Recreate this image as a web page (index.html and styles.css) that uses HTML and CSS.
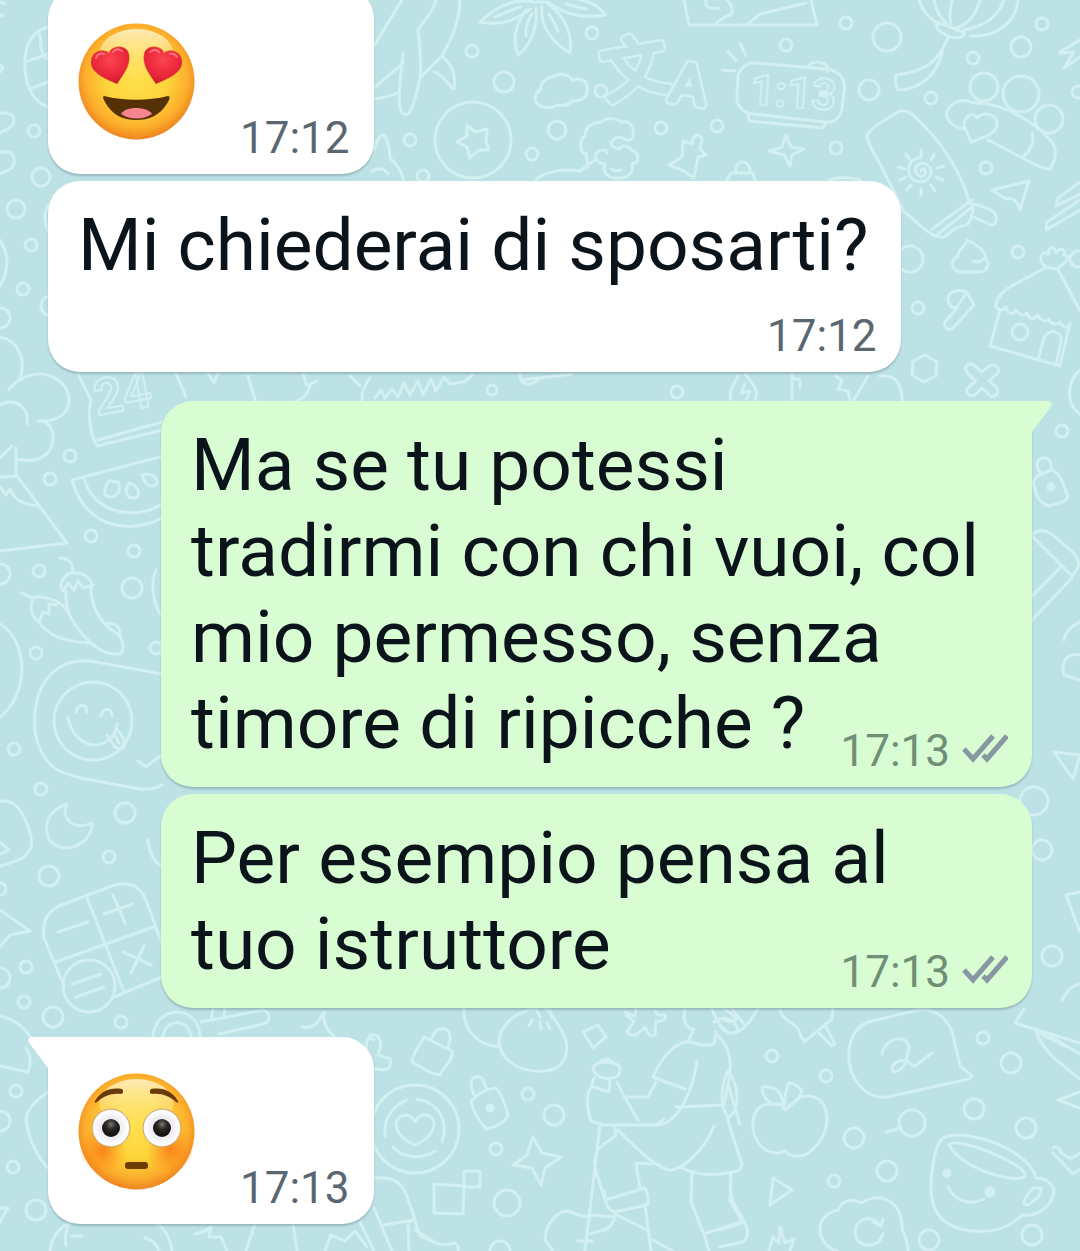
FILE: index.html
```html
<!DOCTYPE html>
<html lang="it">

<head>
    <meta charset="UTF-8">
    <meta name="viewport" content="width=device-width, initial-scale=1.0">
    <title>Chat</title>
    <link rel="stylesheet" href="styles.css">
</head>

<body>
    <!-- doodle wallpaper -->
    <svg class="wallpaper" viewBox="0 0 1080 1251" preserveAspectRatio="xMidYMid slice" aria-hidden="true">
        <!-- small dots -->
        <g>
            <circle cx="34" cy="131" r="6" />
            <circle cx="41" cy="177" r="9" />
            <circle cx="16" cy="209" r="9" />
            <circle cx="31" cy="245" r="6" />
            <circle cx="23" cy="289" r="6" />
            <circle cx="0" cy="318" r="10" />
            <circle cx="51" cy="306" r="10" />
            <circle cx="410" cy="140" r="6" />
            <circle cx="504" cy="82" r="10" />
            <circle cx="472" cy="51" r="6" />
            <circle cx="592" cy="33" r="6" />
            <circle cx="601" cy="91" r="6" />
            <circle cx="557" cy="130" r="9" />
            <circle cx="532" cy="154" r="6" />
            <circle cx="423" cy="176" r="6" />
            <circle cx="661" cy="128" r="6" />
            <circle cx="717" cy="126" r="6" />
            <circle cx="786" cy="45" r="6" />
            <circle cx="846" cy="23" r="6" />
            <circle cx="887" cy="37" r="14" />
            <circle cx="869" cy="90" r="10" />
            <circle cx="836" cy="148" r="6" />
            <circle cx="931" cy="98" r="6" />
            <circle cx="973" cy="58" r="6" />
            <circle cx="1021" cy="47" r="10" />
            <circle cx="1042" cy="24" r="6" />
            <circle cx="1078" cy="92" r="6" />
            <circle cx="986" cy="168" r="6" />
            <circle cx="910" cy="259" r="13" />
            <circle cx="1018" cy="252" r="6" />
            <circle cx="918" cy="308" r="6" />
            <circle cx="1078" cy="259" r="8" />
            <circle cx="1062" cy="431" r="6" />
            <circle cx="70" cy="456" r="6" />
            <circle cx="50" cy="479" r="6" />
            <circle cx="91" cy="536" r="6" />
            <circle cx="134" cy="551" r="6" />
            <circle cx="132" cy="588" r="10" />
            <circle cx="39" cy="571" r="6" />
            <circle cx="0" cy="574" r="10" />
            <circle cx="36" cy="653" r="6" />
            <circle cx="156" cy="648" r="6" />
            <circle cx="14" cy="749" r="6" />
            <circle cx="41" cy="789" r="6" />
            <circle cx="125" cy="813" r="10" />
            <circle cx="109" cy="857" r="6" />
            <circle cx="49" cy="876" r="10" />
            <circle cx="0" cy="889" r="6" />
            <circle cx="26" cy="967" r="6" />
            <circle cx="0" cy="978" r="10" />
            <circle cx="24" cy="1002" r="6" />
            <circle cx="53" cy="1017" r="10" />
            <circle cx="121" cy="1022" r="6" />
            <circle cx="16" cy="1091" r="6" />
            <circle cx="0" cy="1121" r="10" />
            <circle cx="13" cy="1167" r="6" />
            <circle cx="36" cy="1210" r="10" />
            <circle cx="528" cy="1094" r="6" />
            <circle cx="554" cy="1115" r="10" />
            <circle cx="496" cy="1149" r="6" />
            <circle cx="507" cy="1203" r="13" />
            <circle cx="500" cy="1251" r="10" />
            <circle cx="772" cy="1056" r="6" />
            <circle cx="826" cy="1076" r="6" />
            <circle cx="854" cy="1138" r="10" />
            <circle cx="912" cy="1123" r="13" />
            <circle cx="887" cy="1171" r="10" />
            <circle cx="834" cy="1181" r="6" />
            <circle cx="974" cy="1109" r="10" />
            <circle cx="983" cy="1038" r="6" />
            <circle cx="1011" cy="1063" r="10" />
            <circle cx="1026" cy="1128" r="10" />
            <circle cx="929" cy="1240" r="10" />
            <circle cx="1032" cy="1235" r="10" />
            <circle cx="1034" cy="801" r="14" />
            <circle cx="1042" cy="850" r="10" />
            <circle cx="1052" cy="956" r="10" />
            <circle cx="491" cy="413" r="6" />
            <circle cx="492" cy="390" r="5" />
            <circle cx="677" cy="392" r="6" />
            <circle cx="588" cy="414" r="9" />
            <path d="M886 1132l15-4" />
        </g>

        <!-- top left -->
        <path d="M48 27C30 32 24 47 25 68c1 20 9 34 23 39M28 61l20-7M32 88l16-6M40 35c2 12-2 15 8 24" />
        <path d="M0 2l5 2M0 16l3-1M0 65l3 3-3 4M0 113h6c10 1 10 10 3 15l-9 5M0 152h8c8 1 8 14 1 18l-9 4" />
        <path d="M0 240c9 14 9 30 0 46M48 205q-6 12 0 26" />

        <!-- whale tail -->
        <path d="M374 46L402 0M436 0l-4 10-14 20c2 18 4 34 2 48-3 14-6 26-10 34-4 5-9 2-10-5-2-10 0-26 3-54M374 88l29-25M374 99c9-1 17-2 25-7M460 0c0 22-10 42-18 56l-22 22M442 56c10 8 14 20 12 33-7-5-12-16-20-17" />
        <path d="M374 150c3-10 8-20 12-12 3 8 4 14 4 20 6 6 12 12 13 22M372 171c8-4 13-2 16 3" />

        <!-- leaf -->
        <path d="M534 2c-18-4-36 3-54 20 19 4 36-1 50-13M526 10c-10 14-14 30-8 45 12-9 20-27 18-47M542 6c-2 16 6 34 28 47 3-19-6-38-22-49M548 2c16 12 33 17 57 13-7-11-20-16-38-17M536 2l10 0M495 17q15-7 26-10M532 14q-7 10-6 22M549 14q5 8 9 17M566 4q10 3 20 5" />

        <!-- ball, cloud, sheep -->
        <circle cx="473" cy="140" r="38" />
        <path d="M467 125l8 7 12-3-1 12 3 9-10 0-9 8-3-11-10-5 10-6z" />
        <path d="M552 77c7-5 17-3 20 3 10-3 17 2 15 11 0 8-8 10-15 10-4 5-10 5-15 4-6 4-12 3-17 1-7-4-6-13 1-17-1-6 5-11 11-12z" />
        <path d="M585 155c-6-6-6-15 0-19 0-11 10-14 16-14 7-6 16-3 20 0 8-2 13 4 12 10 2 7-4 10-9 7-5-3-10-2-13 4 0 5 6 5 9 6 3-5 7-4 11 1 8 2 10 12 1 14 2 7-3 14-12 14-10 2-19-6-15-14-5 0-11-4-9-10 3-5 10-5 11-1M586 153l2 14M536 179c12-9 30-10 44-8l16-12M611 169q5 3 10 1" />

        <!-- translate sign -->
        <defs>
            <g id="translate">
                <text x="602" y="92" transform="rotate(-10 636 70)" font-size="66">文</text>
                <text x="671" y="103" transform="rotate(8 690 85)" font-size="54">A</text>
            </g>
        </defs>
        <use href="#translate" class="sign-edge" />
        <use href="#translate" class="sign-core" />
        <path d="M684 0l5 25h128L811 0M706 0q-2 10 12 8M727 0c6 6 8 14 0 16l-10 6M748 24l12-10L806 3" />

        <!-- alarm clock -->
        <path d="M738 75c4-9 10-13 18-12l70 6c13 1 20 10 18 22l-2 18c-2 9-8 14-17 13l-72-8c-9-1-17-8-16-17zM748 115l1 6 74 7 3-6M809 67c1-7 17-6 19 1l-1 3M722 70l13 1M728 51l8 10M740 43l6 13" />
        <g class="sign">
            <text x="750" y="107" transform="rotate(4 790 95)" font-size="43">1:13</text>
        </g>
        <path d="M786 135l5 12 13 2-12 6-2 11-6-11-15-4 13-4z" />
        <path d="M669 165l13-8 1-16 9 3c0-10 9-12 10-4l-2 9 6 6-8 2-4 21-10-7zM727 180l4-7h22l2 7M736 173c-2-14 12-14 14-4v4M830 180q14-5 30 0" />

        <!-- lantern -->
        <path d="M919 0c3 10 10 18 19 24M934 0c2 10 6 18 13 24M952 0c-2 10-3 18-1 24M980 0q-6 22-24 28M1004 0q-8 24-40 30M1018 0c-1 18-18 38-48 36M937 22l28 11c-2 6-12 6-19 2-6-3-11-6-9-13zM948 38l-6 12M942 50c-6 8-10 20-46 25-1 7-1 13 3 15 23-1 37-16 43-36zM1060 52l20-12M1060 53l14-1-10 16 16-11" />

        <!-- jelly cake -->
        <path d="M964 129c-11-2-19-9-17-17 3-9 14-15 27-9 32-1 66 25 74 35 10 8 9 20 2 31-8 1-30-13-62-29M1032 133c3 8-2 18-8 23" />
        <path d="M971 142l-6-14c-4-8 6-19 12-10 8-8 22-2 20 7-2 10-13 12-26 17z" />
        <circle cx="984" cy="87" r="14" />
        <circle cx="1021" cy="94" r="18" />
        <circle cx="1049" cy="119" r="14" />

        <!-- mitten -->
        <path d="M902 208l-17-34c-8-18-18-30-18-38 1-7 24-20 33-25 8-2 13 4 22 13 28 27 43 60 47 78 8 4 3 14-1 22-6 3-10 2-15 6l-9 7c-12 3-30-18-42-27zM932 229l40-29M938 234l33-26M975 204l16 6c7 4 7 15 0 15l-20-9" />
        <path d="M921 171c0-5 6-2 4 3-4 6-12-1-9-7 5-8 17-2 15 7-3 11-20 10-22-1-2-9 4-15 11-15M921 150v6M906 154l4 6M934 154l-3 6M898 167l7 2M937 168l7-2M900 180l6-3M936 177l7 3M907 190l4-5M921 189v6M931 185l4 6" />
        <path d="M992 190l37-9-9 29q-4-14-14-11zM1080 182l-22 16-2 8 24-12M1080 210l-34 20 1-8 33-22" />

        <!-- right side -->
        <path d="M967 240c9 4 20 12 18 18 6 6 2 14-6 14h-18c-9-1-12-11-3-16-1-6 8-9 9-16zM985 257q-5 7-12 4" />
        <path d="M948 300c-1-12 20-12 21-4l5 9-21 23c-5 4-10-2-8-6l13-15c-6 2-9-1-10-7zM966 294l-10 14" />
        <circle cx="1020" cy="332" r="8" />
        <path d="M1045 268l-37 20c-8 6-13 14-12 19 2 3 8 5 10 0 2 8 8 8 10 3 3 6 9 6 11 3 2 7 8 7 11 2 3 7 9 7 11 4 2 6 9 6 11 3 3 7 8 6 10 3M1000 310l-10 36 70 20 10-43M1038 360l6-22c4-10 18-8 17 3l-5 24M1058 269l22 42M1046 267c-10-6-3-20 2-12 1-12 8-7 8-2 4-7 10-3 8 2 8 0 2 8-8 14z" />
        <path d="M925 355l12 7-1 14-12 6-12-7 1-14zM967 365c6-4 10 4 15 7 4-4 10-10 15-5 6 6-6 10-8 14 5 4 12 9 7 14-6 5-9-4-14-7-4 4-9 11-14 6-5-6 4-9 8-13-4-4-14-11-9-16zM880 376q22-2 22 24" />
        <path d="M1080 370c-14 12-14 35 0 44M1044 474c-10-3-8-17 0-16 6-1 9 8 6 13M1037 476l14-6c11 3 12 16 17 26-1 8-14 7-18 10-14-2-15-18-17-24z" />
        <circle class="fill" cx="1051" cy="487" r="3" />
        <path d="M1032 534c14-10 22 3 34 12 14 12 17 18 6 30l-40-40M1032 596l28-28M1032 620l40-42M1064 640q2-12 16-18M1080 655c-15-3-19 10-16 20l16 5M1054 752l26 3-7 24zM1066 895l14-3M1066 895l14 37M1062 1000q6-13 18-16" />

        <!-- left side -->
        <path d="M0 337c20 4 26 24 20 42-4 4-8 6-11 10M20 380c20-14 48-2 49 20 0 14-12 22-31 21M0 405c16-9 30 4 27 19M38 421c14 0 17 14 14 24-4 14-20 18-35 14M16 448v27M0 458l12-12M17 476L67 543 0 551M17 476l-17 1M0 487l6 8 4-6c6 15 20 17 29 16" />
        <path d="M78 374l13 26c-4 14 0 36 6 46l66-16M98 440l64-18M176 373l10 24" />
        <g class="sign">
            <text x="94" y="411" transform="rotate(-10 122 395)" font-size="50">24</text>
        </g>
        <path d="M208 373l6 10 5-12M248 376l8 26M303 374l4 12 10-5M310 386q-3 12-14 15M350 376l10 10M370 378c-6 8-10 16-7 24M375 398l6-8 4 8 7-9 6 8 6-14 6 12 8-14 5 14 8-16 5 12 8-14 6 7 14-2 8-7M522 380l50-6M520 374c0 12 10 12 18 6M738 376c-4 10-10 14-7 25M745 374c8 10 14 16 10 26M745 384l-4 9 9-2-3 8M792 374v26M792 378l8 2v8M836 376l6 5-4 8 10 2 2 9M868 376l-14 24" />
        <path d="M72 480l92-24M72 480c14 50 60 54 90 38M84 478c8 34 50 44 78 26M109 481c-8 12-4 16 3 16 7-2 9-9 6-15zM129 483c-5 8-3 15 5 15 8-1 5-12-5-15zM142 475c4 12 10 13 15 9 1-8-8-11-15-9z" />
        <path d="M60 558c10 0 14 6 12 15M63 591c-6-8 4-20 12-18 9-1 16 6 17 12M63 591l5-8 6 7 4-9 5 7 10-3M66 591c-2 20 8 36 26 53 10 8 18 11 29 10 4-8 2-18-8-23-14-10-22-24-22-45M21 593l12 5c-4 12-1 18 6 24M33 598c10-3 24 2 30 8l6 8M39 622l4-10 6 2 0-10 7 1M39 622c10 14 24 20 53 21M106 625c4-4 14-1 14 9" />
        <path d="M0 624c30 18 28 72 0 93" />
        <path d="M162 674l-66-12c-30-6-50 10-58 34-6 24-6 50 14 70 6 6 20 10 34 13l54 10q14 1 22-4M160 756l-14 11-8-6" />
        <circle cx="93" cy="721" r="39" />
        <path d="M68 717c6 36 46 36 49 7M76 712c2-9 10-9 11 0M101 716c2-9 10-9 11 0M107 735l8 12c10 6 10-4 9-8l-7-10M115 735l4 8M156 570q-8 20 4 44" />

        <path d="M0 801c16-1 19 8 25 18 4 10 10 24 4 32-4 8-18 12-29 15M0 842l9 8-9 4M67 804c-26 8-25 36-10 42 18 7 36-8 35-23-18 8-32-4-25-19zM148 840q2 20 14 26M0 910l30 21-20 4-10 12" />
        <path d="M64 904l48-18c16-6 28 0 34 14l16 44M64 904c-18 6-22 20-20 34l20 48M86 895l38 97M56 962l100-36M114 997l48-20M58 932l30-10M104 914l29-10M113 895l12 28M123 952l28 13M144 946l-13 27M72 984l29-10M76 997l28-10" />
        <circle cx="89" cy="986" r="26" />
        <path d="M0 1016q20 4 31 22M153 1036c3-32 45-32 47 0M163 1036c3-18 25-18 28 0M201 1022l62-12c8 2 8 12 0 14l-44 10M213 1008l-2 12M225 1008l-1 10M302 1027c14 3 18-8 22-15-1 10 2 18 10 24" />
        <path d="M0 1066l28 6q5-14-2-24M48 1092c-12 8-20 16-22 26 2 24 14 42 22 50M0 1208l8 0-8 14M50 1251c2-18 14-28 30-32M66 1245c-2-14 2-20 6-24M72 1236h10M150 1220c14 6 20 16 22 31M145 1238q10 2 14 13M195 1234l10-3 6-4-2 10 12 0 6 14M255 1224l-9 27M293 1224l4 27M325 1251l6-16 14 6 10-10 12 16M360 1222l14 29" />

        <!-- bottom middle -->
        <path d="M374 1040c-8-6-7 2-8 8M370 1035c8-1 12 4 10 14l-2 6 12 4c2 6-1 10-6 11l-14-2M424 1037l28 14c2 10-11 18-12 24-12-1-18-8-28-13 0-9 8-15 12-25zM432 1038c4-14 20-12 18 2l-2 8" />
        <circle cx="415" cy="1129" r="44" />
        <path d="M415 1122c5-11 19-8 19 2-1 12-10 17-20 21-8-4-18-11-18-22 2-9 14-11 19-1zM385 1136c-2-18 8-30 22-36M417 1099c22 4 32 22 25 43M393 1147c10 12 30 12 42 4" />
        <path d="M464 1009c-1 22 14 36 36 38M533 1009c-20 4-34 18-34 34 3 20 24 30 46 28 18-1 24-16 21-30-4-12-10-22-20-32M536 1009l4 8M550 1009l2 9M532 1020l-3 6M540 1022l1 7M547 1023l3 6M583 1032l15-7 8 12-13 11zM474 1095c-4-10-4-16 2-18 8-2 8 7 10 11M471 1101c8-8 14-12 25-13 5 5 9 16 12 27-3 8-12 12-22 14-8-9-13-18-15-28z" />
        <circle class="fill" cx="490" cy="1108" r="3" />
        <path d="M533 1137l9 16 19 4-16 11-4 17-9-17-19-3 14-10zM434 1184l30 2-1 28-29-1zM464 1171h16v16h-16zM374 1178c22-2 28 6 33 18l8 24-32 5M374 1208l18 43M408 1224l1 27M415 1221l5 15c12 4 18 12 34 7q6 3 4 8M415 1230l20 12" />
        <path d="M625 1012l10 4 1-8M655 1011c3 8 8 2 10 4 2 5-5 7-9 6l-1 14c-5 3-8-3-10-8-6 6-12 12-18 5l7-11-8-6" />

        <!-- hiker -->
        <path d="M685 1009c-3 14 2 20 9 20l-6 12M712 1009q6 16 16 24M714 1022c10-8 22-2 24 8M725 1009l12 10M688 1041c10 4 20 5 26 3l2-12M688 1041c-18 4-28 20-35 36l32 12M697 1061c-3 24-18 66-42 64h-18M656 1082l-8 15h-22M716 1034c16 14 16 34 12 50l-4 21-48 2M728 1084l12 40M656 1125l8-6M728 1070c12 18 12 40 0 48-8-14-8-28 0-48z" />
        <path d="M593 1067c3-6 20-6 26-1 2 6 0 12-8 12-8 2-18-3-18-11zM599 1063c4-6 12-4 14 0M594 1078l-3 8 18 6 1-13M591 1087c-6 10-4 22 0 34l12 4h36M617 1082c8 18 16 28 21 38M600 1125l-15 126M615 1125c-2 6 4 8-2 13-14 8-20 14-18 30l10 32 40-12c4 6 3 14 3 17l-34 7c-6-2-10-10-9-20M618 1130c18 18 34 34 50 40 16 1 37-22 46-44M652 1164l-16-1 4 26M680 1167c16 8 30 10 58 4M692 1174l-1 28 13 32M731 1173l-1 28 12 20M645 1204l6 47M704 1234l36-12M704 1234l5 17M615 1214l34 17M653 1240l20 11" />
        <path d="M545 1240c1-18 12-28 22-29 10 2 14 8 24 4l24 2c-4 14-14 14-26 17M545 1240l8 11M578 1241h14" />

        <!-- bottom right -->
        <path d="M720 1026c8 12 24 10 38-18M732 1009l12 15M724 1020q8 4 12-2M780 1010c2 12 18 12 20 24l4 8 16-13 12-10 1-10M818 1032l14 14 3-2-10-19" />
        <path d="M868 1022l50-12c18-3 34 12 36 30l6 26 12 10-3 3-82 18c-20 2-30-12-36-26-6-22 0-42 17-49zM882 1054c2-16 26-22 27-5l-3 11c-2 10-14 16-14 8 2-8 14-10 18-4l5 2 17-13" />
        <path d="M771 1104c-16 0-19 14-18 26 4 16 14 24 26 23l6-2c6 8 20 6 26 0 14-12 18-28 15-40-4-16-16-16-26-14l-15 13c-4-8-8-6-14-6zM783 1104c-10 2-20-2-21-17 14-2 20 6 21 17zM785 1104c-1-10 2-16 4-21 6 0 10 4 13 8l-4 8M773 1178l19 12-22 15zM769 1251l4-14 6 6 1-16 5 16 9-4-4 12M720 1230l24-8c6 8 4 18-2 20l-22 5M740 1169l2-4-15-48M731 1173c-3 30 6 34 14 50" />
        <path d="M838 1251c-22-4-26-36 0-41 4-10 14-12 24-7 20-14 42 2 40 26 4 8 6 14 6 22M880 1226c-8-14-26-6-25 7 2 16 24 16 28 1M873 1222l8 4 2-7" />
        <path d="M943 1138c8-4 20-4 36 0 30 7 54 25 57 40 10 0 18 6 18 15-3 14-18 24-32 22-14 14-30 18-50 16-30-3-42-20-41-46 1-20 4-40 12-47zM949 1145c4-10 76 18 76 30 0 10-60-2-76-30zM1033 1188l8 0c2 6-12 20-17 16-1-4 5-12 9-16zM948 1187c8 16 24 18 36 12M1053 1148c4-3 6 0 8 5l10 6 9-6M1053 1153l20 21 7-5" />
        <circle class="fill" cx="947" cy="1173" r="3" />
        <circle class="fill" cx="990" cy="1192" r="4" />
        <path d="M1024 1009l-9 14 65 20M1036 1031c8 24 30 36 44 48M1036 1031l28 15M1050 1036l30 18M1080 1092l-22 8 22 8" />
    </svg>

    <main class="chat">
        <div class="message in compact">
            <!-- heart eyes -->
            <svg class="emoji" viewBox="0 0 117 117" role="img" aria-label="Faccina con occhi a cuore">
                <defs>
                    <radialGradient id="face" cx="50%" cy="46%" r="54%">
                        <stop offset="0" stop-color="#ffe04f" />
                        <stop offset="0.5" stop-color="#fdd43b" />
                        <stop offset="0.82" stop-color="#fcae2b" />
                        <stop offset="1" stop-color="#ee841f" />
                    </radialGradient>
                    <linearGradient id="shine" x1="0" y1="0" x2="0" y2="1">
                        <stop offset="0" stop-color="#fff6d0" stop-opacity="0.85" />
                        <stop offset="1" stop-color="#fff0a0" stop-opacity="0" />
                    </linearGradient>
                    <radialGradient id="heart" cx="50%" cy="35%" r="65%">
                        <stop offset="0" stop-color="#fb4550" />
                        <stop offset="0.7" stop-color="#e9253a" />
                        <stop offset="1" stop-color="#c8192e" />
                    </radialGradient>
                </defs>
                <circle cx="58.5" cy="58.5" r="58" fill="url(#face)" />
                <ellipse cx="58.5" cy="31" rx="37" ry="25" fill="url(#shine)" />
                <g stroke="#d77a1f" stroke-opacity="0.45" stroke-width="1">
                    <path d="M39 61C28 56 12 50 13 38c1-10 12-13 18-8C33 22 50 21 51 32c2 11-7 21-12 29z" fill="url(#heart)" />
                    <path d="M78 61C89 56 105 50 104 38c-1-10-12-13-18-8-2-8-19-9-20 2-2 11 7 21 12 29z" fill="url(#heart)" />
                </g>
                <path d="M18 35q2-6 8-4M35 29q4-5 9-1M72 29q5-4 9 0M92 31q5-1 7 3" fill="none" stroke="#ff929a" stroke-width="2" stroke-linecap="round" opacity="0.7" />
                <path d="M26 73c20 5 44 5 64 0 3 0 1 4 0 6-8 14-19 18-32 18S34 92 27 79c-1-2-3-5-1-6z" fill="#563106" />
                <path d="M43 91c4-8 26-8 31 0-9 6-22 6-31 0z" fill="#f5848e" />
            </svg>
            <span class="meta"><time datetime="17:12">17:12</time></span>
        </div>

        <div class="message in stacked">
            <p class="text">Mi chiederai di sposarti?</p>
            <span class="meta"><time datetime="17:12">17:12</time></span>
        </div>

        <div class="message out first">
            <svg class="tail" viewBox="0 0 20 32" aria-hidden="true">
                <path d="M0 0H16Q22 1 18 7L0 31z" />
            </svg>
            <p class="text">Ma se tu potessi tradirmi con chi vuoi, col mio permesso, senza timore di ripicche ? <span class="meta"><time datetime="17:13">17:13</time><svg class="ticks" viewBox="0 0 46 30" role="img" aria-label="Consegnato"><path d="M2 16l9 10L31 3M21 22l4 4L45 3" /></svg></span></p>
        </div>

        <div class="message out">
            <p class="text">Per esempio pensa al tuo istruttore <span class="meta"><time datetime="17:13">17:13</time><svg class="ticks" viewBox="0 0 46 30" role="img" aria-label="Consegnato"><path d="M2 16l9 10L31 3M21 22l4 4L45 3" /></svg></span></p>
        </div>

        <div class="message in first compact">
            <svg class="tail" viewBox="0 0 20 32" aria-hidden="true">
                <path d="M20 0H4Q-2 1 2 7L20 31z" />
            </svg>
            <!-- flushed -->
            <svg class="emoji" viewBox="0 0 117 117" role="img" aria-label="Faccina arrossita">
                <defs>
                    <radialGradient id="blush">
                        <stop offset="0" stop-color="#fb7414" stop-opacity="0.8" />
                        <stop offset="1" stop-color="#fb8a14" stop-opacity="0" />
                    </radialGradient>
                    <radialGradient id="eye">
                        <stop offset="0.6" stop-color="#f0eef5" />
                        <stop offset="0.9" stop-color="#fff" />
                        <stop offset="1" stop-color="#dcd6d6" />
                    </radialGradient>
                    <radialGradient id="pupil" cx="50%" cy="30%" r="55%">
                        <stop offset="0" stop-color="#777" />
                        <stop offset="0.5" stop-color="#2c2826" />
                        <stop offset="1" stop-color="#171312" />
                    </radialGradient>
                </defs>
                <circle cx="58.5" cy="58.5" r="58" fill="url(#face)" />
                <ellipse cx="58.5" cy="31" rx="37" ry="25" fill="url(#shine)" />
                <circle cx="25" cy="77" r="24" fill="url(#blush)" />
                <circle cx="92" cy="77" r="24" fill="url(#blush)" />
                <circle cx="33" cy="55" r="19" fill="url(#eye)" stroke="#b98a45" stroke-opacity="0.6" />
                <circle cx="84" cy="55" r="19" fill="url(#eye)" stroke="#b98a45" stroke-opacity="0.6" />
                <circle cx="33" cy="55" r="9" fill="url(#pupil)" />
                <circle cx="84" cy="55" r="9" fill="url(#pupil)" />
                <path d="M17 28c6-10 15-14 27-12 2 2 1 5-1 5-10-1-17 2-24 8-2 1-3 1-2-1zM100 28c-6-10-15-14-27-12-2 2-1 5 1 5 10-1 17 2 24 8 2 1 3 1 2-1z" fill="#6b3a0b" />
                <rect x="47" y="89" width="23" height="7" rx="3" fill="#6b3f03" />
            </svg>
            <span class="meta"><time datetime="17:13">17:13</time></span>
        </div>
    </main>
</body>

</html>
```
FILE: styles.css
```css
* {
    margin: 0;
    padding: 0;
    box-sizing: border-box;
}

body {
    position: relative;
    height: 100vh;
    overflow: hidden;
    background: #bde2e6;
    font-family: Roboto, "Noto Sans CJK SC", sans-serif;
    color: #0b141a;
}

/* wallpaper behind the chat */
.wallpaper {
    position: absolute;
    top: 0;
    left: 0;
    width: 100%;
    height: 100%;
    fill: none;
    stroke: #d2eff1;
    stroke-width: 3;
    stroke-linecap: round;
    stroke-linejoin: round;
}

.wallpaper .fill {
    fill: #d2eff1;
}

.wallpaper .sign {
    stroke-width: 2;
    font-weight: bold;
}

/* hollow letters: wide light stroke with a narrower one on top */
.wallpaper .sign-edge {
    stroke-width: 9;
}

.wallpaper .sign-core {
    fill: #bde2e6;
    stroke: #bde2e6;
    stroke-width: 4;
}

/* messages stick to the bottom, older ones scroll off the top */
.chat {
    position: relative;
    display: flex;
    flex-direction: column;
    justify-content: flex-end;
    gap: 7px;
    height: 100%;
    padding: 0 48px 27px;
}

.message {
    position: relative;
    flex-shrink: 0;
    max-width: 871px;
    padding: 21px 32px 10px 30px;
    border-radius: 32px;
    box-shadow: 0 2px 2px rgba(60, 90, 100, 0.3);
}

.in {
    align-self: flex-start;
    background: #fff;
}

.out {
    align-self: flex-end;
    padding-right: 40px;
    background: #d8fdd2;
}

.first {
    margin-top: 22px;
}

.in.first {
    border-top-left-radius: 0;
}

.out.first {
    border-top-right-radius: 0;
}

.tail {
    position: absolute;
    top: 0;
    width: 20px;
    height: 32px;
}

.in .tail {
    right: 100%;
    fill: #fff;
}

.out .tail {
    left: 100%;
    fill: #d8fdd2;
}

.text {
    display: flow-root;
    font-size: 73px;
    line-height: 86px;
}

/* time and ticks, on the last line when there is room */
.meta {
    display: flex;
    align-items: center;
    gap: 12px;
    margin-right: -8px;
    font-size: 44px;
    line-height: 52px;
    color: #5b6770;
}

.out .meta {
    float: right;
    margin: 45px -16px 0 0;
    color: #6f8f76;
}

.ticks {
    width: 46px;
    height: 30px;
    margin-bottom: 6px;
    fill: none;
    stroke: #8798a2;
    stroke-width: 5;
}

.stacked {
    display: flex;
    flex-direction: column;
    gap: 22px;
}

.stacked .meta {
    align-self: flex-end;
}

.compact {
    display: flex;
    align-items: flex-end;
    gap: 45px;
}

.emoji {
    width: 117px;
    height: 117px;
    margin: 15px 0 24px;
}
```
